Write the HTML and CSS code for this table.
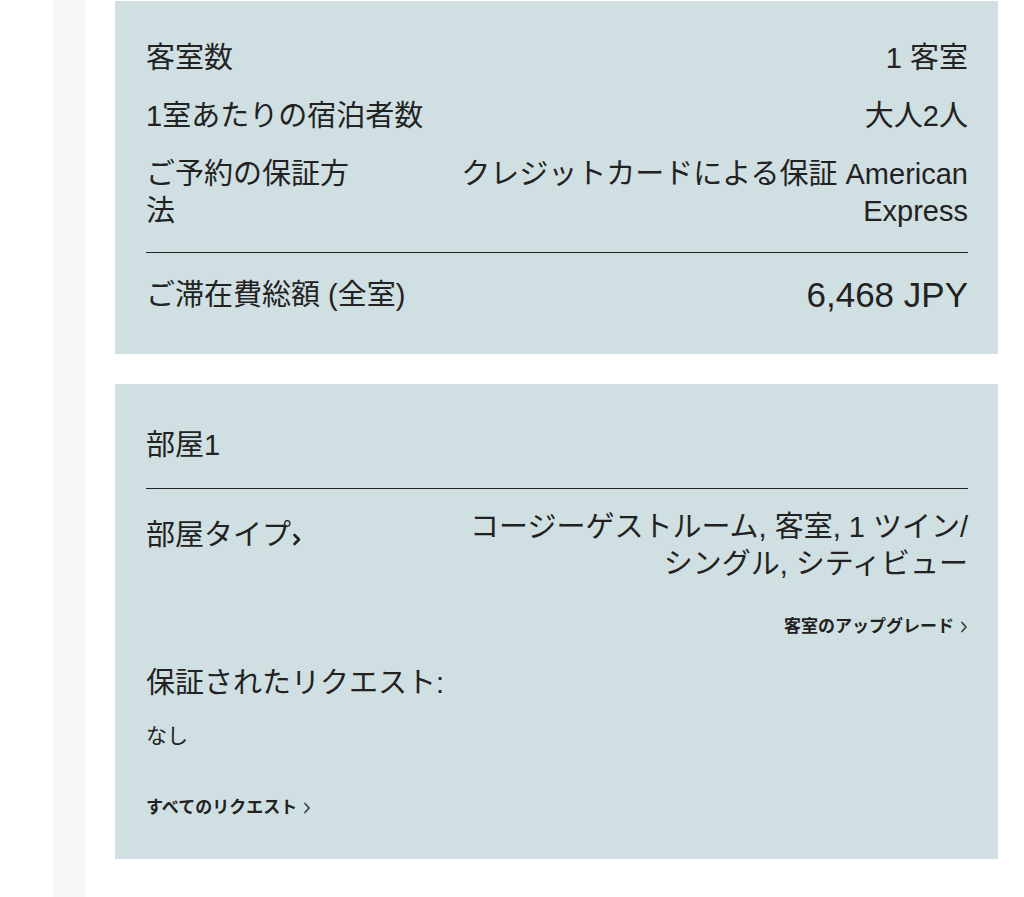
FILE: index.html
```html
<!DOCTYPE html>
<html lang="ja">
<head>
<meta charset="utf-8">
<title>予約内容</title>
<link rel="stylesheet" href="styles.css">
</head>
<body>
<div class="page">
  <div class="rail"></div>
  <main class="cards">
    <section class="card summary">
      <div class="rows">
        <div class="row">
          <div class="label">客室数</div>
          <div class="value">1 客室</div>
        </div>
        <div class="row">
          <div class="label">1室あたりの宿泊者数</div>
          <div class="value">大人2人</div>
        </div>
        <div class="row">
          <div class="label">ご予約の保証方法</div>
          <div class="value">クレジットカードによる保証 American Express</div>
        </div>
      </div>
      <div class="total">
        <div class="total-label">ご滞在費総額 (全室)</div>
        <div class="total-value">6,468 JPY</div>
      </div>
    </section>

    <section class="card room">
      <h2 class="room-title">部屋1</h2>
      <div class="room-body">
        <div class="row room-type">
          <div class="label"><a class="label-link" href="#">部屋タイプ<svg class="chev-bold" width="10" height="14" viewBox="0 0 10 14" aria-hidden="true"><path d="M2.5 3 L7 7.5 L2.5 12" fill="none" stroke="#222" stroke-width="2.6" stroke-linecap="round" stroke-linejoin="round"/></svg></a></div>
          <div class="value">コージーゲストルーム, 客室, 1 ツイン/シングル, シティビュー</div>
        </div>
        <div class="upgrade"><a class="small-link" href="#">客室のアップグレード<svg class="chev" width="8" height="12" viewBox="0 0 8 12" aria-hidden="true"><path d="M2 1.5 L6 6 L2 10.5" fill="none" stroke="#444" stroke-width="1.8" stroke-linecap="round" stroke-linejoin="round"/></svg></a></div>
        <div class="req-title">保証されたリクエスト:</div>
        <div class="req-value">なし</div>
        <div class="all-req"><a class="small-link" href="#">すべてのリクエスト<svg class="chev" width="8" height="12" viewBox="0 0 8 12" aria-hidden="true"><path d="M2 1.5 L6 6 L2 10.5" fill="none" stroke="#444" stroke-width="1.8" stroke-linecap="round" stroke-linejoin="round"/></svg></a></div>
      </div>
    </section>
  </main>
</div>
</body>
</html>
```

FILE: styles.css
```css
html, body {
  margin: 0;
  padding: 0;
  background: #ffffff;
}

body {
  font-family: "Liberation Sans", "Noto Sans CJK JP", sans-serif;
  color: #222222;
}

.page {
  display: flex;
  min-height: 897px;
  padding-left: 53px;
  gap: 29px;
  box-sizing: border-box;
}

.rail {
  width: 33px;
  flex: none;
  background: #f7f7f7;
}

.cards {
  width: 883px;
  display: flex;
  flex-direction: column;
  gap: 30px;
  padding-top: 1px;
}

.card {
  background: #d0dfe2;
  padding: 39px 30px 39px 31px;
}

.rows {
  display: flex;
  flex-direction: column;
  gap: 21px;
}

.row {
  display: flex;
  justify-content: space-between;
  gap: 90px;
  font-size: 29px;
  line-height: 37px;
}

.label {
  flex: 1 1 auto;
  min-width: 0;
}

.value {
  flex: 0 0 auto;
  max-width: 518px;
  text-align: right;
}

.total {
  margin-top: 22px;
  border-top: 1px solid #222222;
  padding-top: 22px;
  display: flex;
  justify-content: space-between;
  align-items: center;
  line-height: 40px;
}

.total-label {
  font-size: 29px;
}

.total-value {
  font-size: 35px;
}

.room-title {
  margin: 0;
  padding: 4px 0 24px;
  font-size: 29px;
  line-height: 37px;
  font-weight: normal;
  border-bottom: 1px solid #222222;
}

.room-body {
  padding-top: 20px;
  display: flex;
  flex-direction: column;
}

.room-type .label {
  padding-top: 8px;
}

.label-link {
  color: inherit;
  text-decoration: none;
}

.chev-bold {
  margin-left: 1px;
  vertical-align: -1px;
}

.upgrade {
  margin-top: 32px;
  text-align: right;
  font-size: 17px;
  line-height: 24px;
}

.small-link {
  color: #222222;
  font-weight: bold;
  text-decoration: none;
}

.chev {
  margin-left: 6px;
  vertical-align: -1px;
}

.req-title {
  margin-top: 26px;
  font-size: 29px;
  line-height: 37px;
}

.req-value {
  margin-top: 19px;
  font-size: 21px;
  line-height: 30px;
}

.all-req {
  margin-top: 45px;
  font-size: 17px;
  line-height: 24px;
}
```
